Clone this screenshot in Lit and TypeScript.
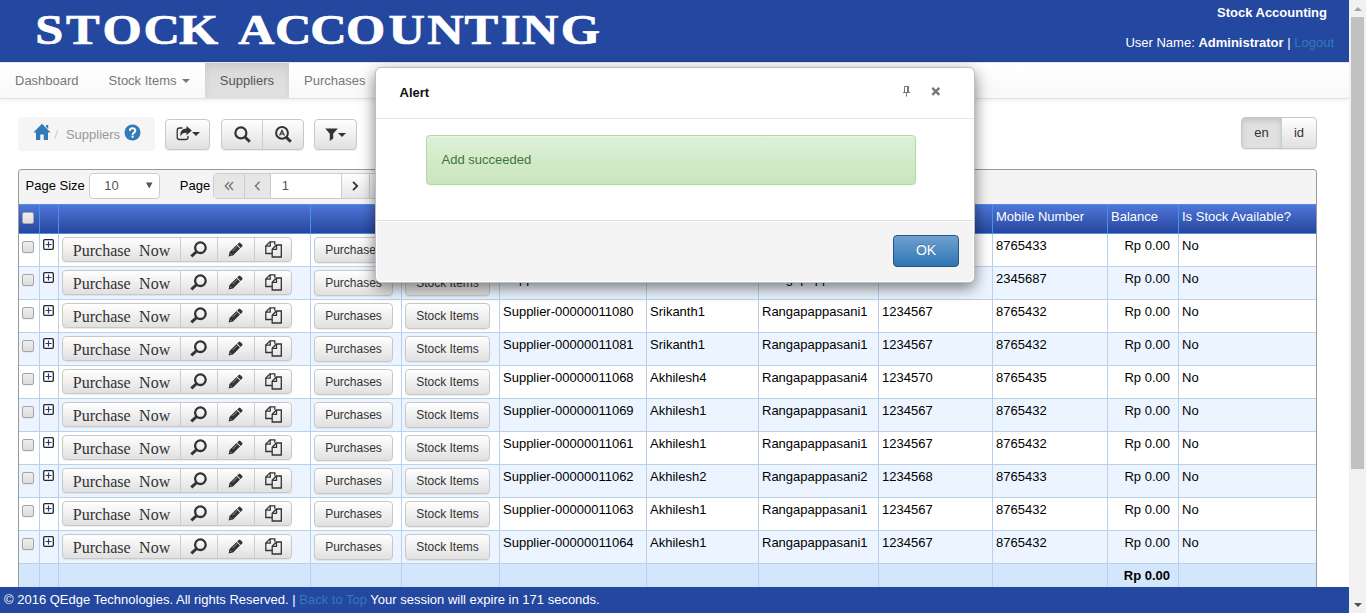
import { LitElement, html, svg, css } from "lit";
import { customElement } from "lit/decorators.js";

type Row = [string, string, string, string, string];

const rows: Row[] = [
  ["Supplier-00000011078", "Srikanth1", "Rangapappasani1", "", "8765433"],
  ["Supplier-00000011079", "Srikanth1", "Rangapappasani1", "1234567", "2345687"],
  ["Supplier-00000011080", "Srikanth1", "Rangapappasani1", "1234567", "8765432"],
  ["Supplier-00000011081", "Srikanth1", "Rangapappasani1", "1234567", "8765432"],
  ["Supplier-00000011068", "Akhilesh4", "Rangapappasani4", "1234570", "8765435"],
  ["Supplier-00000011069", "Akhilesh1", "Rangapappasani1", "1234567", "8765432"],
  ["Supplier-00000011061", "Akhilesh1", "Rangapappasani1", "1234567", "8765432"],
  ["Supplier-00000011062", "Akhilesh2", "Rangapappasani2", "1234568", "8765433"],
  ["Supplier-00000011063", "Akhilesh1", "Rangapappasani1", "1234567", "8765432"],
  ["Supplier-00000011064", "Akhilesh1", "Rangapappasani1", "1234567", "8765432"],
];

const icon = (w: number, h: number, body: unknown) =>
  html`<svg width=${w} height=${h} viewBox="0 0 ${w} ${h}" fill="currentColor">${body}</svg>`;

const home = icon(18, 18, svg`<path d="M9 .8 17.6 9.6H15V17h-4.3v-5.6H7.3V17H3V9.6H.4z M13 1.9h2.2v4L13 3.8z"/>`);
const help = icon(17, 17, svg`<circle cx="8.5" cy="8.5" r="8"/><path d="M5.9 6.7c0-3.3 5.4-3.3 5.4 0 0 2-2.7 2-2.7 4" fill="none" stroke="#fff" stroke-width="2"/><path d="M7.5 11.6h2.2v2H7.5z" fill="#fff"/>`);
const share = icon(16, 15, svg`<path d="M6.500 2H3.500Q1.200 2 1.200 4.300v6.900Q1.200 13.500 3.500 13.500H9.700q2.300 0 2.300-2.300V10" fill="none" stroke="currentColor" stroke-width="1.300"/><path d="M10.500 0l5.300 4.600-5.300 4.600V6.800C7.500 6.600 5.800 7.500 4.700 10.500 3.600 5.400 6.500 2.600 10.500 2.500z"/>`);
const search = icon(17, 17, svg`<circle cx="6.900" cy="6.900" r="5.500" fill="none" stroke="currentColor" stroke-width="2.200"/><path d="M10.700 10.800 15.800 15.800" stroke="currentColor" stroke-width="3"/>`);
const searchA = icon(17, 17, svg`<circle cx="7" cy="6.900" r="5.900" fill="none" stroke="currentColor" stroke-width="2"/><path d="M11 11 15.800 15.800" stroke="currentColor" stroke-width="3"/><path d="M4.600 9.600 7 4.400 9.400 9.600M5.400 8H8.600" fill="none" stroke="currentColor" stroke-width="1.200"/>`);
const funnel = icon(13, 13, svg`<path d="M.2.5h12.600L8.200 5.800V10.600L4.800 13v-7.200z"/>`);
const caret = icon(8, 4, svg`<path d="M0 0h8L4 4z"/>`);
const look = icon(17, 17, svg`<circle cx="10.400" cy="6.700" r="5.300" fill="none" stroke="currentColor" stroke-width="2.300"/><path d="M6.700 10.500 1.300 15.300" stroke="currentColor" stroke-width="3"/>`);
const pencil = icon(15, 15, svg`<path d="M10.700.9q.8-.7 1.600 0l1.900 1.900q.7.8 0 1.600L12.700 5.900 9.200 2.400zM8.500 3.100l3.500 3.500-7 7L.6 14.500 1.500 10.100z"/><path d="M2.200 11.800 3.400 13M4.600 9 9.200 4.400" stroke="#ddd" stroke-width=".6"/>`);
const copy = icon(17, 17, svg`<g fill="none" stroke="currentColor" stroke-width="1.300"><path d="M7 12.500H.8V5L5 .8h4.800v3"/><path d="M5.200.8v4.400H.8"/><path d="M7.200 8.200 11.300 4h5v12H7.200z"/><path d="M11.500 4v4.400H7.200"/></g>`);
const plus = icon(11, 11, svg`<rect x=".7" y=".7" width="9.600" height="9.600" rx="1" fill="#fff" stroke="#26262c" stroke-width="1.300"/><path d="M2.500 5.500h6M5.500 2.500v6" stroke="#223c78" stroke-width="1.200"/>`);
const chevL = icon(7, 10, svg`<path d="M5.500 .8 1.500 5 5.500 9.200" fill="none" stroke="currentColor" stroke-width="1.500"/>`);
const chevR = icon(7, 10, svg`<path d="M1 .8l4.200 4.200L1 9.200" fill="none" stroke="currentColor" stroke-width="1.800"/>`);
const chevLL = icon(10, 10, svg`<path d="M5 1 1.300 5 5 9M9 1 5.300 5 9 9" fill="none" stroke="currentColor" stroke-width="1.400"/>`);
const pin = icon(8, 11, svg`<path d="M1.500 .5h4v6h-4z" fill="none" stroke="currentColor"/><path d="M4 0h2v6H4zM0 6h7v1H0zM3 7h1v3.500H3z"/>`);
const cross = icon(10, 9, svg`<path d="M1.300.8 8.300 7.800M8.300.8 1.300 7.800" stroke="currentColor" stroke-width="2.400"/>`);

@customElement("app-root")
export class AppRoot extends LitElement {
  static styles = css`
    :host { display: block; width: 1366px; height: 613px; overflow: hidden; position: relative; background: #fff; font: 13px/18px "Liberation Sans", Arial, sans-serif; color: #000; }
    * { box-sizing: border-box; }
    svg { display: block; flex: none; }
    .screen { display: flex; height: 613px; }
    .page { width: 1349px; height: 613px; display: flex; flex-direction: column; overflow: hidden; }
    .scroll { width: 17px; background: #f1f1f1; display: flex; flex-direction: column; align-items: center; color: #a3a3a3; padding: 7px 0 6px; }
    .thumb { width: 13px; height: 452px; background: #c1c1c1; margin-top: 6px; }
    .down { margin-top: auto; color: #505050; }
    .head { height: 62px; flex: none; background: #2447a0; color: #fff; display: flex; justify-content: space-between; }
    .logo text { font: bold 42px "Liberation Serif", serif; fill: #fff; stroke: #fff; stroke-width: .7px; }
    .who { padding: 3px 15px 0 0; text-align: right; }
    .who .app { padding-right: 7px; font-weight: bold; height: 30px; line-height: 19px; }
    .who .user { line-height: 19px; }
    .link { color: #337ab7; }
    .nav { height: 37px; flex: none; display: flex; border-top: 1px solid #e3e5ea; border-bottom: 1px solid #e1e1e1; background: linear-gradient(#fff, #f8f8f8); box-shadow: 0 1px 5px rgba(0,0,0,.08); color: #777; }
    .tab { padding: 0 15px; line-height: 35px; display: flex; align-items: center; gap: 5.500px; }
    .tab:nth-child(2) { padding-right: 14.800px; }
    .tab.on { color: #555; background: linear-gradient(#d9d9d9, #e2e2e2); box-shadow: inset 0 3px 9px rgba(0,0,0,.075); }
    .tools { display: flex; height: 70px; flex: none; padding: 18px 32px 0 18px; align-items: flex-start; }
    .crumb { width: 137px; height: 34px; background: #f5f5f5; border-radius: 4px; display: flex; padding: 6px 0 0 15px; color: #999; line-height: 23px; }
    .crumb .blue { color: #337ab7; }
    .crumb .slash { color: #ccc; padding: 0 8px 0 3.300px; }
    .crumb .help { margin-left: 4px; padding-top: 1px; color: #337ab7; }
    .grp { display: flex; border: 1px solid #c8c8c8; border-radius: 4px; background: linear-gradient(#fff, #e0e0e0); color: #333; box-shadow: 0 1px 1px rgba(0,0,0,.075); overflow: hidden; }
    .grp > * { display: flex; align-items: center; justify-content: center; border-right: 1px solid #ccc; flex: none; }
    .grp > *:last-child { border-right: 0; }
    .tb { height: 31px; margin-top: 2px; }
    .exp { width: 45px; margin-left: 10px; }
    .exp .one { padding-bottom: 2px; }
    .sr { width: 83px; margin-left: 11px; }
    .sr > * { width: 41px; }
    .sr > *:last-child { width: 40px; }
    .fl { width: 43px; margin-left: 10px; }
    .one { width: 100%; }
    .lang { margin-left: auto; width: 76px; height: 32px; line-height: 30px; }
    .lang .en { width: 40px; background: #e0e0e0; box-shadow: inset 0 3px 5px rgba(0,0,0,.125); }
    .lang .id { width: 34px; }
    .panel { width: 1299px; height: 418px; margin-left: 18px; border: 1px solid #999; border-bottom: 0; border-radius: 4px 4px 0 0; overflow: hidden; flex: none; }
    .pager { height: 34px; background: #f4f4f4; display: flex; padding: 3px 0 0 6.500px; line-height: 25px; }
    .select { width: 71px; height: 26px; border: 1px solid #ccc; border-radius: 4px; background: #fff; margin: 0 19.500px 0 4.500px; display: flex; align-items: center; justify-content: space-between; padding: 0 6px 1px 14px; color: #555; }
    .pages { width: 190px; height: 26px; margin-left: 2.500px; display: flex; border: 1px solid #ccc; border-radius: 4px; }
    .pages > * { display: flex; align-items: center; justify-content: center; border-right: 1px solid #ccc; background: linear-gradient(#fff, #e6e6e6); color: #333; }
    .pages .off { background: #e6e6e6; color: #777; }
    .pages .a { width: 31px; }
    .pages .b { width: 26px; }
    .pages .num { width: 71px; background: #fff; color: #555; justify-content: flex-start; padding: 0 0 1px 11px; }
    .pages .c { width: 28px; }
    .grid { display: grid; grid-template-columns: 21px 19px 252px 91px 98px 147px 112px 120px 114px 115px 71px 137px; }
    .grid > * { border-right: 1px solid #b9d1ed; border-bottom: 1px solid #b9d1ed; padding: 3px 3px 0; white-space: nowrap; }
    .grid > *:last-child { border-right: 0; }
    .th { height: 30px; background: linear-gradient(#4f76d8, #24459c); color: #fff; border-top: 1px solid #4a8fe8; }
    .th > * { border-color: #4a8fe8; }
    .tr { height: 33px; background: #fff; }
    .alt { background: #ecf5ff; }
    .sum { height: 33px; background: #d4e6fc; font-weight: bold; }
    .grid .num { text-align: right; padding-right: 8px; }
    .grid .pad { padding: 7px 0 0 3px; }
    .grid .xp { padding: 5px 0 0 3px; }
    .box { display: block; width: 12px; height: 12px; border: 1px solid #a5a5a5; border-radius: 2px; background: linear-gradient(#eee, #dcdcdc); box-shadow: 0 1px 0 rgba(0,0,0,.05); }
    .acts { width: 230px; height: 25px; }
    .acts > * { width: 37px; padding-right: 1px; }
    .acts > *:last-child { width: 36px; padding-right: 0; }
    .acts .buy { width: 118px; font: 16px/22px "Liberation Serif", serif; word-spacing: 4.500px; padding: 3px 0 0; }
    .btn { height: 26px; border: 1px solid #c8c8c8; border-radius: 4px; background: linear-gradient(#fff, #e0e0e0); box-shadow: 0 1px 1px rgba(0,0,0,.075); color: #333; font-size: 12px; line-height: 24px; text-align: center; }
    .btn.p { width: 79px; }
    .btn.s { width: 85px; }
    .foot { height: 26px; background: #2447a0; color: #fff; line-height: 25px; padding-left: 4px; flex: none; }
    .modal { position: absolute; left: 375px; top: 67px; width: 600px; height: 216px; border: 1px solid #bdbdbd; border-radius: 6px; background: #fff; box-shadow: 0 5px 15px rgba(0,0,0,.5); display: flex; flex-direction: column; }
    .mh { height: 51px; flex: none; border-bottom: 1px solid #e5e5e5; display: flex; padding: 15px 33px 0 23.500px; }
    .mh b { flex: 1; padding-top: 1px; color: #111; }
    .mh .ico { color: #777; display: flex; gap: 20px; align-items: center; height: 16px; }
    .mb { height: 101px; flex: none; padding: 16px 58px 0 50px; }
    .ok { height: 50px; border: 1px solid #b2dba1; border-radius: 4px; background: linear-gradient(#dff0d8, #c8e5bc); box-shadow: inset 0 1px 0 rgba(255,255,255,.25), 0 1px 2px rgba(0,0,0,.05); color: #3c763d; padding-left: 14.500px; line-height: 47px; font-size: 13px; }
    .mf { height: 61px; flex: none; margin: 0 1px 1px; border-top: 1px solid #ddd; box-shadow: inset 0 1px 0 #fff; background: #f4f4f4; border-radius: 0 0 5px 5px; display: flex; justify-content: flex-end; padding: 14px 14px 0 0; }
    .go { width: 66px; height: 32px; border: 1px solid #245580; border-radius: 4px; background: linear-gradient(#6ea1d0, #2f76b5); color: #fff; font-size: 14px; line-height: 29px; text-align: center; text-shadow: 0 -1px 0 rgba(0,0,0,.2); }
  `;

  private check() {
    return html`<span class="pad"><i class="box"></i></span>`;
  }

  private row(r: Row, i: number) {
    return html`<div class="grid tr ${i % 2 ? "alt" : ""}">
      ${this.check()}<span class="xp">${plus}</span>
      <div><div class="grp acts"><span class="buy">Purchase Now</span><span>${look}</span><span>${pencil}</span><span>${copy}</span></div></div>
      <div><div class="btn p">Purchases</div></div>
      <div><div class="btn s">Stock Items</div></div>
      ${r.map((c) => html`<span>${c}</span>`)}
      <span class="num">Rp 0.00</span><span>No</span>
    </div>`;
  }

  render() {
    const titles = ["", "", "", "", "Supplier Number", "Supplier Name", "Address", "Phone Number", "Mobile Number", "Balance", "Is Stock Available?"];
    return html`
      <div class="screen">
        <div class="page">
          <header class="head">
            <svg class="logo" width="640" height="62"><text y="44" transform="scale(1.2 1)" x="29.4 55 85.500 119.500 149.200 185 198.500 229.200 258.500 288.300 323.800 356 387 417.500 435 467.300">STOCK ACCOUNTING</text></svg>
            <div class="who"><div class="app">Stock Accounting</div><div class="user">User Name: <b>Administrator</b> | <span class="link">Logout</span></div></div>
          </header>
          <nav class="nav">
            <span class="tab">Dashboard</span><span class="tab">Stock Items ${caret}</span><span class="tab on">Suppliers</span><span class="tab">Purchases</span>
          </nav>
          <div class="tools">
            <div class="crumb"><span class="blue">${home}</span><span class="slash">/</span><span>Suppliers</span><span class="help">${help}</span></div>
            <div class="grp tb exp"><span class="one">${share}${caret}</span></div>
            <div class="grp tb sr"><span>${search}</span><span>${searchA}</span></div>
            <div class="grp tb fl"><span class="one">${funnel}${caret}</span></div>
            <div class="grp lang"><span class="en">en</span><span class="id">id</span></div>
          </div>
          <div class="panel">
            <div class="pager">
              <span>Page Size</span>
              <div class="select"><span>10</span>${icon(7, 7, svg`<path d="M0 .5h6.500L3.250 6.500z"/>`)}</div>
              <span>Page</span>
              <div class="pages"><span class="off a">${chevLL}</span><span class="off b">${chevL}</span><span class="num">1</span><span class="c">${chevR}</span><span class="c"></span></div>
            </div>
            <div class="grid th">${this.check()}${titles.map((t) => html`<span>${t}</span>`)}</div>
            ${rows.map((r, i) => this.row(r, i))}
            <div class="grid sum">${Array.from({ length: 10 }, () => html`<span></span>`)}<span class="num">Rp 0.00</span><span></span></div>
          </div>
          <footer class="foot">© 2016 QEdge Technologies. All rights Reserved. | <span class="link">Back to Top</span> Your session will expire in 171 seconds.</footer>
        </div>
        <div class="scroll">${icon(8, 4, svg`<path d="M0 4h8L4 0z"/>`)}<div class="thumb"></div><span class="down">${caret}</span></div>
      </div>
      <section class="modal">
        <div class="mh"><b>Alert</b><span class="ico">${pin}${cross}</span></div>
        <div class="mb"><div class="ok">Add succeeded</div></div>
        <div class="mf"><div class="go">OK</div></div>
      </section>
    `;
  }
}
